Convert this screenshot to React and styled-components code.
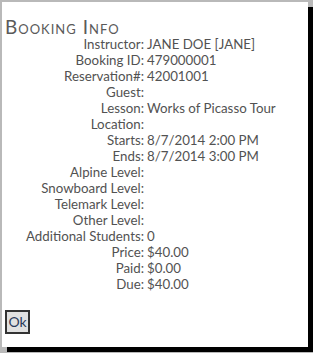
import React from "react";
import styled, { createGlobalStyle } from "styled-components";

const Global = createGlobalStyle`
  html, body { margin: 0; padding: 0; background: #b9b9b9; }
  body { width: 313px; height: 353px; overflow: hidden; }
`;

const Dialog = styled.div`
  margin: 2px 0 0 2px;
  width: 306px;
  height: 345px;
  background: #fff;
  box-shadow: 5px 5px 0 #000;
  box-sizing: border-box;
  padding: 14px 0 0 3px;
  font-family: Lato, "Liberation Sans", sans-serif;
  color: #525252;
  display: flex;
  flex-direction: column;
`;

const Title = styled.h1`
  margin: 0 0 -2px 0;
  font-size: 19px;
  font-weight: 400;
  font-variant: small-caps;
  line-height: 22px;
  color: #5a5a5a;
  letter-spacing: 1px;
`;

const Fields = styled.div`
  display: grid;
  grid-template-columns: 139px 1fr;
  column-gap: 3px;
  font-size: 13.3px;
  line-height: 16px;
`;

const Label = styled.div`
  text-align: right;
  white-space: nowrap;
`;

const Value = styled.div`
  white-space: nowrap;
`;

const OkButton = styled.button`
  margin: 18px 0 0 0;
  align-self: flex-start;
  box-sizing: border-box;
  width: 25px;
  height: 24px;
  padding: 0;
  background: #e1e1e1;
  border: 2px solid #333;
  font-family: Lato, "Liberation Sans", sans-serif;
  font-size: 14px;
  color: #2a3a5a;
  line-height: 18px;
`;

const rows = [
  ["Instructor:", "JANE DOE [JANE]"],
  ["Booking ID:", "479000001"],
  ["Reservation#:", "42001001"],
  ["Guest:", ""],
  ["Lesson:", "Works of Picasso Tour"],
  ["Location:", ""],
  ["Starts:", "8/7/2014 2:00 PM"],
  ["Ends:", "8/7/2014 3:00 PM"],
  ["Alpine Level:", ""],
  ["Snowboard Level:", ""],
  ["Telemark Level:", ""],
  ["Other Level:", ""],
  ["Additional Students:", "0"],
  ["Price:", "$40.00"],
  ["Paid:", "$0.00"],
  ["Due:", "$40.00"],
];

export default function App() {
  return (
    <>
      <Global />
      <Dialog>
        <Title>Booking Info</Title>
        <Fields>
          {rows.map(([l, v]) => (
            <React.Fragment key={l}>
              <Label>{l}</Label>
              <Value>{v}</Value>
            </React.Fragment>
          ))}
        </Fields>
        <OkButton>Ok</OkButton>
      </Dialog>
    </>
  );
}
